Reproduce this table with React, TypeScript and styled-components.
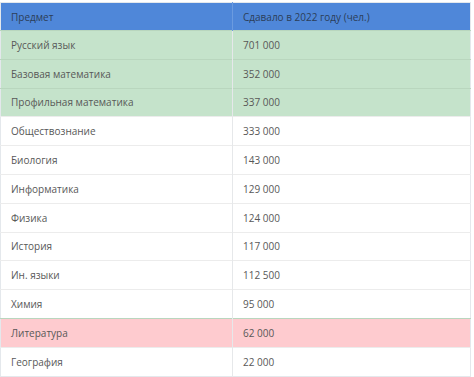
import styled, { createGlobalStyle } from "styled-components";

const rows = [
	{ name: "Русский язык", count: "701 000", tone: "green" },
	{ name: "Базовая математика", count: "352 000", tone: "green" },
	{ name: "Профильная математика", count: "337 000", tone: "green" },
	{ name: "Обществознание", count: "333 000", tone: "plain" },
	{ name: "Биология", count: "143 000", tone: "plain" },
	{ name: "Информатика", count: "129 000", tone: "plain" },
	{ name: "Физика", count: "124 000", tone: "plain" },
	{ name: "История", count: "117 000", tone: "plain" },
	{ name: "Ин. языки", count: "112 500", tone: "plain" },
	{ name: "Химия", count: "95 000", tone: "plain" },
	{ name: "Литература", count: "62 000", tone: "red" },
	{ name: "География", count: "22 000", tone: "plain" },
];

type Tone = "green" | "red" | "plain";

const toneBg: Record<Tone, string> = {
	green: "#c5e3cb",
	red: "#fecbcf",
	plain: "#ffffff",
};

const Global = createGlobalStyle`
	body {
		margin: 0;
		background: #fff;
		font-family: "Open Sans", "Liberation Sans", sans-serif;
	}
`;

const Table = styled.table`
	margin-top: 2px;
	width: 471px;
	border-collapse: collapse;
	border: 1px solid #e4e8ec;
	font-size: 10px;
	color: #585858;
`;

const HeadCell = styled.th`
	height: 27px;
	padding: 0 10px;
	background: #4f87d9;
	color: #2c3e58;
	font-weight: 400;
	text-align: left;
	border-left: 1px solid #6b9be0;
	&:first-child {
		border-left: none;
		width: 211px;
	}
`;

const Row = styled.tr<{ $tone: Tone }>`
	background: ${(p) => toneBg[p.$tone]};
	border-top: 1px solid ${(p) => (p.$tone === "plain" ? "#ececec" : "#b9d6be")};
`;

const Cell = styled.td`
	height: 27.8px;
	padding: 0 10px;
	border-left: 1px solid #e6e8ea;
	&:first-child {
		border-left: none;
	}
`;

function App() {
	return (
		<>
			<Global />
			<Table>
				<thead>
					<tr>
						<HeadCell>Предмет</HeadCell>
						<HeadCell>Сдавало в 2022 году (чел.)</HeadCell>
					</tr>
				</thead>
				<tbody>
					{rows.map((r) => (
						<Row key={r.name} $tone={r.tone as Tone}>
							<Cell>{r.name}</Cell>
							<Cell>{r.count}</Cell>
						</Row>
					))}
				</tbody>
			</Table>
		</>
	);
}

export default App;
